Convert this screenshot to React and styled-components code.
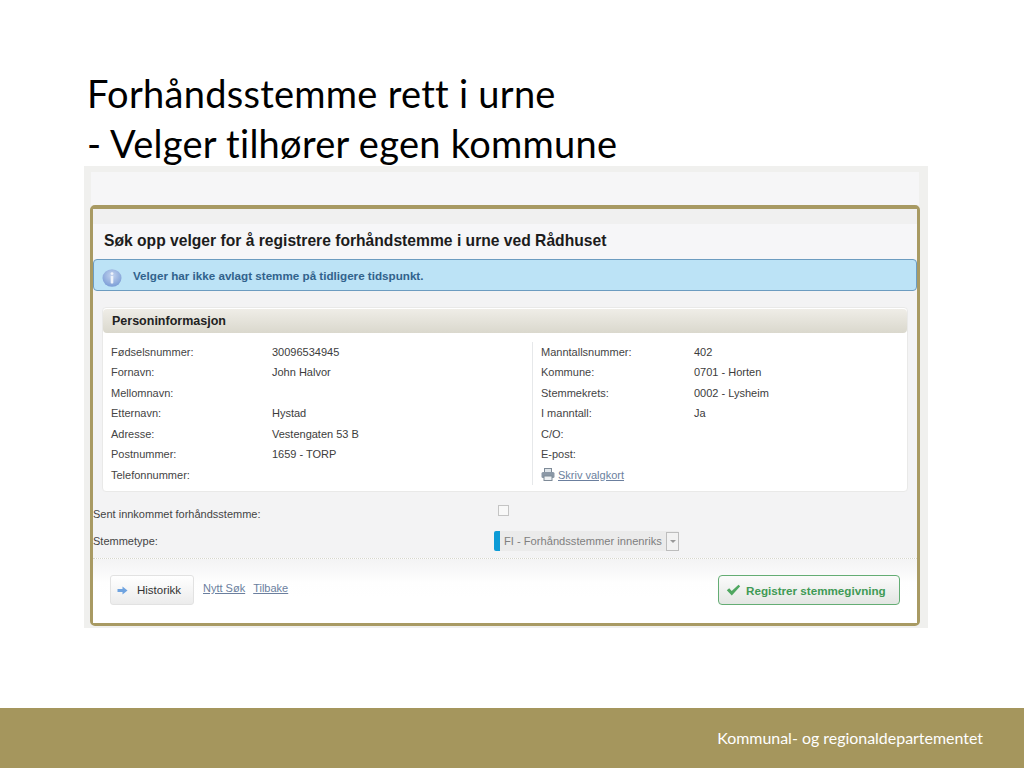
import styled, { createGlobalStyle } from "styled-components";

const Global = createGlobalStyle`
  html, body { margin: 0; padding: 0; background: #fff; }
  body { font-family: "Liberation Sans", Arial, sans-serif; }
`;

const Slide = styled.div`
  width: 1024px;
  height: 768px;
  display: flex;
  flex-direction: column;
  overflow: hidden;
`;

const Main = styled.div`
  flex: 1;
  padding: 68px 96px 0 84px;
`;

const Title = styled.h1`
  margin: 0 0 -2px 3px;
  font: 400 38px/50px Lato, "Open Sans", sans-serif;
  color: #000;
  letter-spacing: 0.27px;
  white-space: nowrap;
`;

const Shot = styled.div`
  background: #f0f0ee;
  height: 462px;
  padding: 6px 8px 0 6px;
  box-sizing: border-box;
`;

const TopStrip = styled.div`
  height: 33px;
  margin: 0 1px 0 1px;
  background: #f6f6f7;
`;

const Card = styled.div`
  height: 421px;
  width: 830px;
  box-sizing: border-box;
  border: 3px solid #a89a63;
  border-top-width: 4px;
  border-radius: 5px;
  background: #f3f3f4;
  display: flex;
  flex-direction: column;
`;

const CardHead = styled.div`
  padding-top: 15px;
  background: #f0f0f0;
`;

const Heading = styled.h2`
  margin: 0;
  height: 35px;
  padding-left: 11px;
  background: #f6f6f8;
  font-size: 15.65px;
  line-height: 34px;
  font-weight: 700;
  color: #1c1c1c;
  white-space: nowrap;
`;

const Alert = styled.div`
  height: 32px;
  box-sizing: border-box;
  border: 1px solid #6c9cc0;
  border-radius: 4px;
  background: #bce3f6;
  display: flex;
  align-items: center;
  gap: 11px;
  padding-left: 8px;
  font-size: 11.65px;
  font-weight: 700;
  color: #31628c;
`;

const AlertIcon = styled.span`
  display: flex;
  margin-top: 5px;
`;

const Panel = styled.section`
  margin: 16px 9px 0 9px;
  height: 185px;
  box-sizing: border-box;
  background: #fff;
  border: 1px solid #e9e9e8;
  border-radius: 4px;
  display: flex;
  flex-direction: column;
`;

const PanelHead = styled.h3`
  margin: 1px 0 0;
  height: 24px;
  flex: none;
  padding-left: 9px;
  border-radius: 4px;
  background: linear-gradient(#efede7, #dad8cd);
  font-size: 12.5px;
  line-height: 24px;
  font-weight: 700;
  color: #222;
`;

const PanelBody = styled.div`
  display: grid;
  grid-template-columns: 429px 1fr;
  padding-top: 9px;
`;

const Column = styled.div`
  padding-left: ${(p) => p.$inset}px;
  ${(p) => p.$divided && "border-left: 1px solid #e6e8ea;"}
`;

const Row = styled.div`
  display: grid;
  grid-template-columns: ${(p) => p.$labelWidth}px 1fr;
  height: 20.45px;
  line-height: 20px;
  font-size: 11px;
  color: #444;
`;

const Value = styled.span`
  color: #3c3c3c;
`;

const PrintLink = styled.div`
  display: flex;
  align-items: center;
  gap: 3px;
  height: 20px;
  font-size: 11px;
`;

const TextLink = styled.a`
  color: #6b7f9e;
  font-size: 11px;
  text-decoration: underline;
`;

const FormRow = styled.div`
  display: grid;
  grid-template-columns: 401px 1fr;
  align-items: center;
  height: ${(p) => p.$height}px;
  padding-top: ${(p) => p.$top}px;
  box-sizing: border-box;
  font-size: 11px;
  color: #444;
`;

const Checkbox = styled.span`
  display: block;
  width: 9px;
  height: 9px;
  margin: 0 0 8px 4px;
  border: 1px solid #c4c4c4;
  background: #f8f8f8;
`;

const Select = styled.div`
  width: 185px;
  height: 20px;
  box-sizing: border-box;
  display: flex;
  align-items: center;
  background: #ebebeb;
  border-left: 6px solid #0d9bd6;
  border-radius: 2px;
  padding-left: 4px;
  color: #808080;
  font-size: 11.15px;
`;

const SelectText = styled.span`
  flex: 1;
  white-space: nowrap;
`;

const SelectArrow = styled.span`
  width: 13px;
  height: 19px;
  box-sizing: border-box;
  border: 1px solid #bdbdbd;
  background: #f2f2f2;
  display: flex;
  align-items: center;
  justify-content: center;
  &::after {
    content: "";
    border: 3px solid transparent;
    border-top: 3px solid #999;
    margin-top: 3px;
  }
`;

const Actions = styled.div`
  flex: 1;
  margin-top: 4px;
  border-top: 1px dotted #d6d6cc;
  background: linear-gradient(#f3f3f4, #fefefe 24px, #fff 60%);
  display: flex;
  align-items: flex-start;
  padding: 16px 17px 0 17px;
`;

const Button = styled.button`
  height: 30px;
  box-sizing: border-box;
  border-radius: 3px;
  font-family: inherit;
  display: flex;
  align-items: center;
  padding: 0;
`;

const HistoryButton = styled(Button)`
  width: 84px;
  border: 1px solid #e2e2e2;
  background: linear-gradient(#fff, #ececec);
  color: #333;
  font-size: 11.5px;
  gap: 9px;
  padding-left: 6px;
`;

const SaveButton = styled(Button)`
  width: 182px;
  margin-left: auto;
  border: 1px solid #64ad74;
  border-radius: 4px;
  background: linear-gradient(#fbfbfb, #e3e6e3);
  color: #3f9a55;
  font-size: 11.65px;
  font-weight: 700;
  gap: 5px;
  padding-left: 7px;
`;

const Links = styled.div`
  display: flex;
  gap: 8px;
  margin: 7px 0 0 9px;
`;

const Footer = styled.footer`
  height: 60px;
  flex: none;
  background: #a5965d;
  color: #fff;
  font: 400 15.95px/60px Lato, "Open Sans", sans-serif;
  text-align: right;
  padding-right: 41px;
`;

const left = [
  ["Fødselsnummer:", "30096534945"],
  ["Fornavn:", "John Halvor"],
  ["Mellomnavn:", ""],
  ["Etternavn:", "Hystad"],
  ["Adresse:", "Vestengaten 53 B"],
  ["Postnummer:", "1659 - TORP"],
  ["Telefonnummer:", ""],
];

const right = [
  ["Manntallsnummer:", "402"],
  ["Kommune:", "0701 - Horten"],
  ["Stemmekrets:", "0002 - Lysheim"],
  ["I manntall:", "Ja"],
  ["C/O:", ""],
  ["E-post:", ""],
];

function InfoIcon() {
  return (
    <svg width="20" height="18" viewBox="0 0 20 18">
      <defs>
        <radialGradient id="inf" cx="50%" cy="35%" r="65%">
          <stop offset="0" stopColor="#c4d4ef" />
          <stop offset="1" stopColor="#7b9dd6" />
        </radialGradient>
      </defs>
      <ellipse cx="10" cy="9" rx="9.5" ry="8.8" fill="url(#inf)" />
      <circle cx="10" cy="4.6" r="1.4" fill="#eef3fb" />
      <rect x="8.7" y="7" width="2.6" height="7.4" rx="0.6" fill="#eef3fb" />
    </svg>
  );
}

function PrinterIcon() {
  return (
    <svg width="14" height="13" viewBox="0 0 14 13">
      <rect x="3.5" y="0.5" width="7" height="4" fill="#dfe5ea" stroke="#7f8b98" />
      <rect x="0.5" y="4" width="13" height="6" rx="1.5" fill="#8b98a6" />
      <rect x="3" y="8" width="8" height="4.5" fill="#eef1f3" stroke="#7f8b98" />
    </svg>
  );
}

function ArrowIcon() {
  return (
    <svg width="11" height="9" viewBox="0 0 11 9">
      <path d="M0.5 3h5V0.5L10.5 4.5 5.5 8.5V6h-5z" fill="#6fa3e0" />
    </svg>
  );
}

function CheckIcon() {
  return (
    <svg width="15" height="12" viewBox="0 0 15 12">
      <path d="M0.8 6.2 3.2 4.3 5.7 7 12.5 0.8 14.2 2.2 5.8 11.4z" fill="#4fa760" />
    </svg>
  );
}

export default function App() {
  return (
    <Slide>
      <Global />
      <Main>
        <Title>
          Forhåndsstemme rett i urne
          <br />- Velger tilhører egen kommune
        </Title>
        <Shot>
          <TopStrip />
          <Card>
            <CardHead>
              <Heading>Søk opp velger for å registrere forhåndstemme i urne ved Rådhuset</Heading>
            </CardHead>
            <Alert>
              <AlertIcon>
                <InfoIcon />
              </AlertIcon>
              Velger har ikke avlagt stemme på tidligere tidspunkt.
            </Alert>
            <Panel>
              <PanelHead>Personinformasjon</PanelHead>
              <PanelBody>
                <Column $inset={8}>
                  {left.map(([label, value]) => (
                    <Row key={label} $labelWidth={161}>
                      <span>{label}</span>
                      <Value>{value}</Value>
                    </Row>
                  ))}
                </Column>
                <Column $inset={8} $divided>
                  {right.map(([label, value]) => (
                    <Row key={label} $labelWidth={153}>
                      <span>{label}</span>
                      <Value>{value}</Value>
                    </Row>
                  ))}
                  <PrintLink>
                    <PrinterIcon />
                    <TextLink>Skriv valgkort</TextLink>
                  </PrintLink>
                </Column>
              </PanelBody>
            </Panel>
            <FormRow $height={36} $top={8}>
              <span>Sent innkommet forhåndsstemme:</span>
              <Checkbox />
            </FormRow>
            <FormRow $height={26} $top={0}>
              <span>Stemmetype:</span>
              <Select>
                <SelectText>FI - Forhåndsstemmer innenriks</SelectText>
                <SelectArrow />
              </Select>
            </FormRow>
            <Actions>
              <HistoryButton>
                <ArrowIcon />
                Historikk
              </HistoryButton>
              <Links>
                <TextLink>Nytt Søk</TextLink>
                <TextLink>Tilbake</TextLink>
              </Links>
              <SaveButton>
                <CheckIcon />
                Registrer stemmegivning
              </SaveButton>
            </Actions>
          </Card>
        </Shot>
      </Main>
      <Footer>Kommunal- og regionaldepartementet</Footer>
    </Slide>
  );
}
